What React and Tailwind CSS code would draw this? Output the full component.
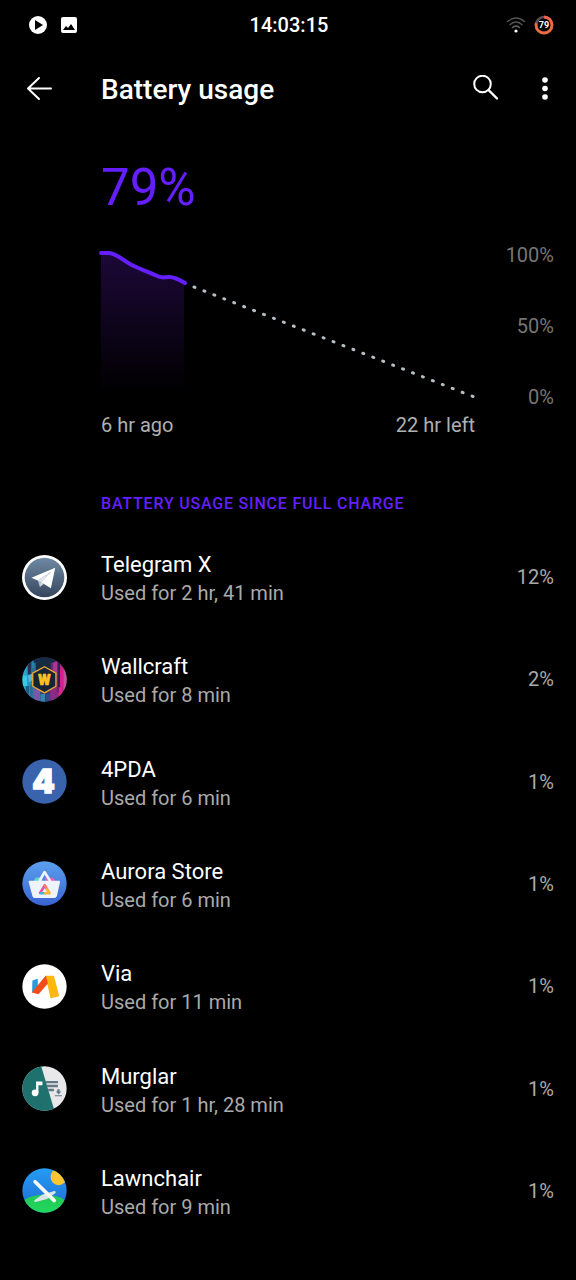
import { useState } from "react";

const TelegramIcon = () => (
  <svg viewBox="37 42 134 134" className="size-[45px]" aria-hidden="true">
    <defs>
      <linearGradient id="tg-bg" x1="0" y1="0" x2="0" y2="1">
        <stop offset="0" stopColor="#7089a2" />
        <stop offset="1" stopColor="#35475f" />
      </linearGradient>
    </defs>
    <circle cx="104" cy="109" r="67" fill="#fff" />
    <circle cx="104" cy="109" r="59" fill="url(#tg-bg)" />
    <path d="M84 117 L90 137 L101 126 L121 96Z" fill="#b4c0cc" />
    <path d="M136 80 L65 110 L84 118 L124 92 L94 123 L123 141Z" fill="#fff" />
    <path d="M94 123 L90 137 L101 128Z" fill="#d5dde5" />
    <path d="M84 118 L124 92 L94 123Z" fill="#dfe5eb" />
  </svg>
);

const WallcraftIcon = () => (
  <svg viewBox="37 36 134 134" className="size-[45px]" aria-hidden="true">
    <defs>
      <clipPath id="wc-clip">
        <circle cx="104" cy="103" r="66" />
      </clipPath>
      <linearGradient id="wc-bg">
        <stop offset="0" stopColor="#28b4dc" />
        <stop offset="0.25" stopColor="#287fa6" />
        <stop offset="0.5" stopColor="#272e4e" />
        <stop offset="0.72" stopColor="#7d287a" />
        <stop offset="1" stopColor="#c13791" />
      </linearGradient>
    </defs>
    <g clipPath="url(#wc-clip)">
      <rect x="37" y="36" width="134" height="134" fill="url(#wc-bg)" />
      <path d="M54 36h11v52H54z" fill="#243250" />
      <path d="M72 36h64v17H72z" fill="#172a43" />
      <path d="M78 53h44v22H78z" fill="#142b42" />
      <path d="M64 68h12v30H64zM60 120h9v45h-9z" fill="#2e6c91" />
      <path d="M38 92h14v30H38z" fill="#37c9e7" />
      <path d="M48 122h10v26H48z" fill="#176086" />
      <path d="M73 132h18v34H73z" fill="#7957ad" />
      <path d="M92 146h14v24H92z" fill="#3087ae" />
      <path d="M107 145h13v25h-13z" fill="#32488b" />
      <path d="M121 125h16v40h-16z" fill="#8b2b85" />
      <path d="M130 52h12v35h-12z" fill="#a93996" />
      <path d="M143 50h7v92h-7z" fill="#30204b" />
      <path d="M151 70h8v54h-8z" fill="#e31a8a" />
      <path d="M161 60h10v80h-10z" fill="#c0559e" />
      <path d="M146 126h10v24h-10z" fill="#ee1c8d" />
      <path d="M55 92l12-7v20l-9 7z" fill="#5ab8d5" />
      <path d="M104 65 L138 84 V123 L104 143 L69 123 V84Z" fill="#172336" stroke="#f0a933" strokeWidth="4" />
      <text x="104" y="119" textAnchor="middle" fontSize="42" fill="#ffc21f" stroke="#ffc21f" strokeWidth="2" className="font-black">
        W
      </text>
    </g>
  </svg>
);

const FourPdaIcon = () => (
  <svg viewBox="37 36 134 134" className="size-[45px]" aria-hidden="true">
    <circle cx="104" cy="103" r="66" fill="#3a63ad" />
    <text
      x="101"
      y="138"
      textAnchor="middle"
      fontSize="96"
      fill="#fff"
      stroke="#fff"
      strokeWidth="4"
      className="font-['Inter',sans-serif] font-black"
    >
      4
    </text>
  </svg>
);

const AuroraIcon = () => (
  <svg viewBox="37 36 134 134" className="size-[45px]" aria-hidden="true">
    <defs>
      <linearGradient id="au-bg" x1="0" y1="0" x2="0" y2="1">
        <stop offset="0" stopColor="#5ba0ee" />
        <stop offset="1" stopColor="#3a63d2" />
      </linearGradient>
    </defs>
    <circle cx="104" cy="103" r="66" fill="url(#au-bg)" />
    <path d="M72 96 L77 86 L95 84 L99 96Z" fill="#61d9c4" />
    <path d="M108 96 L106 86 H127 Q134 87 135 96Z" fill="#f062b0" />
    <path d="M89 96 L104 69 L121 96" fill="none" stroke="#eef3fc" strokeWidth="8" strokeLinejoin="round" />
    <path d="M60 95 H148 Q151 95 150 99 L141 140 Q139 146 133 146 H75 Q69 146 68 140 L57 99 Q56 95 60 95Z" fill="#eef3fc" />
    <path d="M91 131 L105 109" stroke="#ee4bab" strokeWidth="8" strokeLinecap="round" />
    <path d="M105 109 L118 131" stroke="#ff7860" strokeWidth="8" strokeLinecap="round" />
    <path d="M118 132 L112 121" stroke="#ffba25" strokeWidth="7" strokeLinecap="round" />
    <path d="M93 132 H106" stroke="#38bdd0" strokeWidth="7" strokeLinecap="round" />
    <path d="M106 132 H118" stroke="#fbb82d" strokeWidth="7" strokeLinecap="round" />
  </svg>
);

const ViaIcon = () => (
  <svg viewBox="37 36 134 134" className="size-[45px]" aria-hidden="true">
    <circle cx="104" cy="103" r="66" fill="#fff" />
    <path d="M68 85 L84 80 L84 106 L67 121Z" fill="#299bdc" />
    <path d="M107 71 H132 L148 132 L122 138Z" fill="#fdb70d" />
    <path d="M108 70 L114 94 L86 126 L66 121Z" fill="#f04b18" />
  </svg>
);

const MurglarIcon = () => (
  <svg viewBox="37 36 134 134" className="size-[45px]" aria-hidden="true">
    <defs>
      <clipPath id="mg-clip">
        <circle cx="104" cy="103" r="66" />
      </clipPath>
    </defs>
    <g clipPath="url(#mg-clip)">
      <path d="M37 36h134v134H37z" fill="#e8e8ea" />
      <path d="M37 36 H94 L134 170 H37Z" fill="#1f716e" />
    </g>
    <path d="M107 81h37v6h-35zM110 92h34v7h-32zM114 104h18v7h-16z" fill="#637784" />
    <path d="M142 105h7v7h5l-8 9-8-9h4zM135 123h21v3h-21z" fill="#637784" />
    <circle cx="76" cy="116" r="10" fill="#fff" />
    <path d="M79 82 H98 V93 H86 V116 H79Z" fill="#fff" />
  </svg>
);

const LawnchairIcon = () => (
  <svg viewBox="37 36 134 134" className="size-[45px]" aria-hidden="true">
    <defs>
      <clipPath id="lc-clip">
        <circle cx="104" cy="103" r="66" />
      </clipPath>
      <linearGradient id="lc-sky" x1="0" y1="0" x2="0" y2="1">
        <stop offset="0" stopColor="#249df5" />
        <stop offset="1" stopColor="#2168d0" />
      </linearGradient>
      <linearGradient id="lc-grass" x1="0" y1="0" x2="0" y2="1">
        <stop offset="0" stopColor="#22c953" />
        <stop offset="1" stopColor="#20e568" />
      </linearGradient>
    </defs>
    <g clipPath="url(#lc-clip)">
      <path d="M37 36h134v134H37z" fill="url(#lc-sky)" />
      <circle cx="146" cy="63" r="24" fill="#fdc52f" />
      <ellipse cx="104" cy="165" rx="84" ry="49" fill="url(#lc-grass)" />
    </g>
    <path d="M134 108 L98 119 L77 134 L108 126Z" fill="#d9e4e8" stroke="#d9e4e8" strokeWidth="7" strokeLinejoin="round" />
    <path d="M76 77 L133 133" stroke="#f7f9fb" strokeWidth="11" strokeLinecap="round" />
  </svg>
);

const apps = [
  { name: "Telegram X", used: "Used for 2 hr, 41 min", percent: "12%", Icon: TelegramIcon },
  { name: "Wallcraft", used: "Used for 8 min", percent: "2%", Icon: WallcraftIcon },
  { name: "4PDA", used: "Used for 6 min", percent: "1%", Icon: FourPdaIcon },
  { name: "Aurora Store", used: "Used for 6 min", percent: "1%", Icon: AuroraIcon },
  { name: "Via", used: "Used for 11 min", percent: "1%", Icon: ViaIcon },
  { name: "Murglar", used: "Used for 1 hr, 28 min", percent: "1%", Icon: MurglarIcon },
  { name: "Lawnchair", used: "Used for 9 min", percent: "1%", Icon: LawnchairIcon },
];

const StatusBar = () => (
  <div className="grid grid-cols-3 items-center h-[50px] pl-[28px] pr-[22px]">
    <div className="flex items-center gap-3">
      <svg viewBox="0 0 20 20" className="size-5" aria-hidden="true">
        <circle cx="10" cy="10" r="9" fill="#fff" />
        <path d="M7 5 L15 10 L7 15Z" fill="#000" />
      </svg>
      <svg viewBox="0 0 18 18" className="size-[18px]" aria-hidden="true">
        <rect x="1" y="1" width="16" height="16" rx="2" fill="#fff" />
        <path d="M3 14 L6 10 L8 12 L11 8 L15 14Z" fill="#000" />
      </svg>
    </div>
    <time className="pr-1 text-center text-[20px] leading-6 font-medium">14:03:15</time>
    <div className="flex items-center justify-end gap-2">
      <svg viewBox="0 0 20 16" className="w-5 h-4" fill="none" aria-hidden="true">
        <path d="M1 5 Q10 -3 19 5" stroke="#555" strokeWidth="1.2" />
        <path d="M3.5 8 Q10 2 16.5 8" stroke="#555" strokeWidth="1.2" />
        <path d="M6 11 Q10 7 14 11" stroke="#666" strokeWidth="1.2" />
        <circle cx="10" cy="14" r="1.6" fill="#fff" />
      </svg>
      <svg viewBox="0 0 20 20" className="size-5" aria-label="Battery 79%">
        <circle cx="10" cy="10" r="8" fill="none" stroke="#5b4f55" strokeWidth="2.6" />
        <circle
          cx="10"
          cy="10"
          r="8"
          fill="none"
          stroke="#f3693f"
          strokeWidth="2.8"
          pathLength="100"
          strokeDasharray="79 21"
          transform="rotate(-90 10 10)"
        />
        <text x="10" y="13" textAnchor="middle" fontSize="9" fontWeight="700" fill="#fff">
          79
        </text>
      </svg>
    </div>
  </div>
);

const BatteryChart = () => (
  <div className="pl-[101px] pr-[22px] text-[20px] leading-7">
    <div className="grid grid-cols-[1fr_79px]">
      <svg viewBox="0 0 374 170" className="w-full overflow-visible" fill="none" aria-label="Battery level">
        <defs>
          <linearGradient id="level" x1="0" y1="0" x2="0" y2="1">
            <stop offset="0" stopColor="#1c0838" />
            <stop offset="1" stopColor="#000" />
          </linearGradient>
        </defs>
        <path d="M0 12 H9 C15 12 20 18 29 23 S48 31 59 36 S74 34 83 42 V152 H0Z" fill="url(#level)" />
        <path
          d="M0 12 H7 C15 12 20 18 29 23 S46 30 54 34 S62 36 68 36 S79 39 84 42"
          stroke="#651fff"
          strokeWidth="4"
          strokeLinecap="round"
        />
        <path
          d="M93 46 L372 155.500"
          stroke="#b5c0c5"
          strokeWidth="3"
          strokeLinecap="round"
          strokeDasharray="1 9.67"
        />
      </svg>
      <div className="flex flex-col justify-between text-right text-[#757575]">
        <span>100%</span>
        <span>50%</span>
        <span>0%</span>
      </div>
    </div>
    <div className="flex justify-between mr-[79px] text-[#b0b0b0]">
      <span>6 hr ago</span>
      <span>22 hr left</span>
    </div>
  </div>
);

const App = () => {
  const [selected, setSelected] = useState(null);

  return (
    <main className="min-h-screen bg-black text-white font-['Roboto',sans-serif]">
      <StatusBar />

      {/* Toolbar */}
      <header className="flex items-center h-20 pl-[22px] pr-4">
        <button type="button" aria-label="Back" className="w-[79px]">
          <svg viewBox="0 0 34 34" className="size-[34px]" fill="none" stroke="#fff" strokeWidth="2" strokeLinecap="round" strokeLinejoin="round" aria-hidden="true">
            <path d="M29 15.500 H6 M17 5 L6 15.500 L17 26" />
          </svg>
        </button>
        <h1 className="flex-1 text-[28px] leading-9 font-medium">Battery usage</h1>
        <button type="button" aria-label="Search">
          <svg viewBox="0 0 30 30" className="size-[30px]" fill="none" stroke="#fff" strokeWidth="2" strokeLinecap="round" aria-hidden="true">
            <circle cx="12.500" cy="9" r="8.300" />
            <path d="M18.500 15 L27 23.500" strokeWidth="2.400" />
          </svg>
        </button>
        <button type="button" aria-label="More options" className="ml-[30px]">
          <svg viewBox="0 0 30 30" className="size-[30px]" fill="#fff" aria-hidden="true">
            <circle cx="15" cy="5" r="2.800" />
            <circle cx="15" cy="13.500" r="2.800" />
            <circle cx="15" cy="22" r="2.800" />
          </svg>
        </button>
      </header>

      <p className="pt-7 pb-[23px] pl-[101px] text-[51px] leading-[60px] text-[#651fff]">79%</p>

      <BatteryChart />

      <h2 className="pt-[55px] pb-3 pl-[101px] text-[16px] leading-5 font-medium tracking-wider text-[#651fff]">
        BATTERY USAGE SINCE FULL CHARGE
      </h2>

      <ul className="grid auto-rows-fr min-h-[716px]">
        {apps.map(({ name, used, percent, Icon }) => (
          <li key={name} className="grid">
            <button
              type="button"
              aria-pressed={selected === name}
              onClick={() => setSelected(name)}
              className="flex items-center pl-[22px] pr-[22px] text-left"
            >
              <span className="w-[79px] shrink-0">
                <Icon />
              </span>
              <span className="flex-1 pt-1">
                <span className="block text-[22px] leading-7">{name}</span>
                <span className="block text-[20px] leading-7 text-[#aaaaaa]">{used}</span>
              </span>
              <span className="text-[20px] leading-7 text-[#aaaaaa]">{percent}</span>
            </button>
          </li>
        ))}
      </ul>
    </main>
  );
};

export default App;
